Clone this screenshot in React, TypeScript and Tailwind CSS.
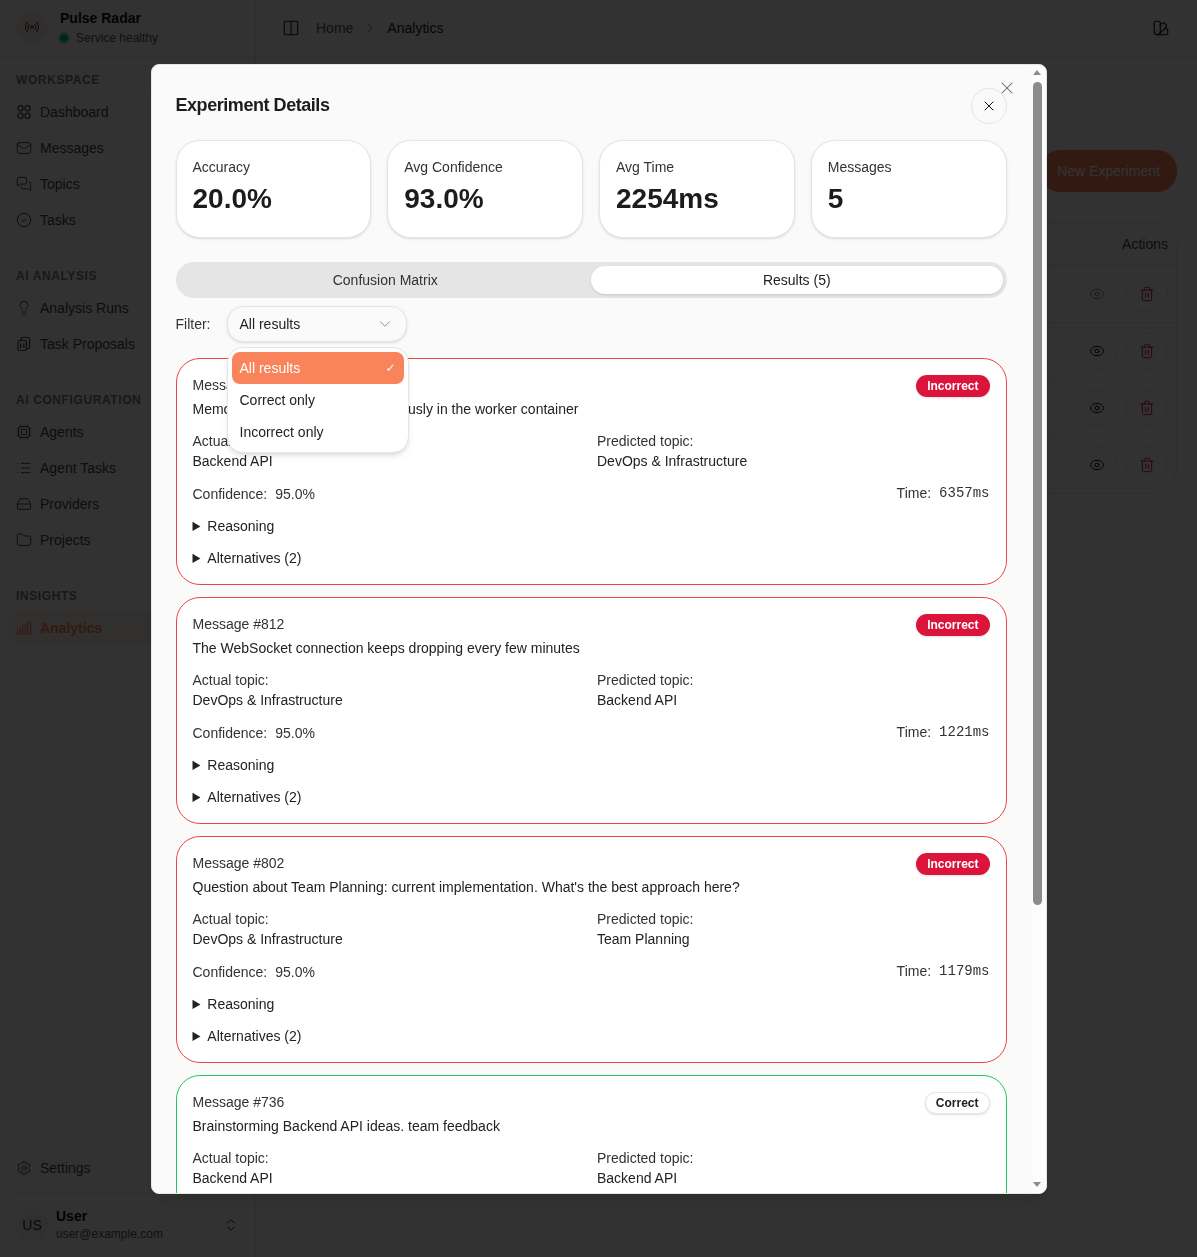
import {
  ChevronDown,
  ChevronRight,
  ChevronsUpDown,
  CircleCheck,
  Columns2,
  Cpu,
  Eye,
  Folder,
  HardDrive,
  Lightbulb,
  List,
  Mail,
  MessagesSquare,
  Radio,
  Settings,
  SwatchBook,
  Trash2,
  X,
  type LucideIcon,
} from "lucide-react";
import type { ReactNode } from "react";

function DashboardIcon() {
  return (
    <svg width="16" height="16" viewBox="0 0 16 16" fill="none" stroke="currentColor" strokeWidth="1.2">
      <rect x="2" y="1.6" width="5" height="5.4" rx="2.4" />
      <rect x="9" y="1.6" width="5" height="5.4" rx="2.4" />
      <rect x="2" y="9" width="5" height="5.4" rx="2.4" />
      <rect x="9" y="9" width="5" height="5.4" rx="2.4" />
    </svg>
  );
}

function ProposalsIcon() {
  return (
    <svg width="16" height="16" viewBox="0 0 16 16" fill="none" stroke="currentColor" strokeWidth="1.2">
      <rect x="2" y="4.5" width="8.5" height="10" rx="1.4" />
      <path d="M5 4.5V2.8c0-.8.6-1.3 1.3-1.3h6c.8 0 1.4.6 1.4 1.4v8.3c0 .8-.6 1.3-1.3 1.3h-1.9" />
      <path d="M4.6 7.5v4.5M7.8 7.5v4.5" />
    </svg>
  );
}

function BarsIcon() {
  return (
    <svg width="16" height="16" viewBox="0 0 16 16" fill="none" stroke="currentColor" strokeWidth="1.2">
      <rect x="1.6" y="9" width="3" height="5.5" rx="1.5" />
      <rect x="6.6" y="5.5" width="3" height="9" rx="1.5" />
      <rect x="11.6" y="1.5" width="3" height="13" rx="1.5" />
    </svg>
  );
}

type NavEntry = { label: string; icon: ReactNode; active?: boolean };

const lucide = (Icon: LucideIcon) => <Icon size={16} strokeWidth={1.5} />;

const sections: { title: string; items: NavEntry[] }[] = [
  {
    title: "Workspace",
    items: [
      { label: "Dashboard", icon: <DashboardIcon /> },
      { label: "Messages", icon: lucide(Mail) },
      { label: "Topics", icon: lucide(MessagesSquare) },
      { label: "Tasks", icon: lucide(CircleCheck) },
    ],
  },
  {
    title: "AI Analysis",
    items: [
      { label: "Analysis Runs", icon: lucide(Lightbulb) },
      { label: "Task Proposals", icon: <ProposalsIcon /> },
    ],
  },
  {
    title: "AI Configuration",
    items: [
      { label: "Agents", icon: lucide(Cpu) },
      { label: "Agent Tasks", icon: lucide(List) },
      { label: "Providers", icon: lucide(HardDrive) },
      { label: "Projects", icon: lucide(Folder) },
    ],
  },
  {
    title: "Insights",
    items: [{ label: "Analytics", icon: <BarsIcon />, active: true }],
  },
];

const stats = [
  { label: "Accuracy", value: "20.0%" },
  { label: "Avg Confidence", value: "93.0%" },
  { label: "Avg Time", value: "2254ms" },
  { label: "Messages", value: "5" },
];

type Result = {
  id: number;
  text: string;
  actual: string;
  predicted: string;
  confidence: string;
  time: string;
  correct: boolean;
};

const results: Result[] = [
  {
    id: 823,
    text: "Memory leak keeps rising continuously in the worker container",
    actual: "Backend API",
    predicted: "DevOps & Infrastructure",
    confidence: "95.0%",
    time: "6357ms",
    correct: false,
  },
  {
    id: 812,
    text: "The WebSocket connection keeps dropping every few minutes",
    actual: "DevOps & Infrastructure",
    predicted: "Backend API",
    confidence: "95.0%",
    time: "1221ms",
    correct: false,
  },
  {
    id: 802,
    text: "Question about Team Planning: current implementation. What's the best approach here?",
    actual: "DevOps & Infrastructure",
    predicted: "Team Planning",
    confidence: "95.0%",
    time: "1179ms",
    correct: false,
  },
  {
    id: 736,
    text: "Brainstorming Backend API ideas. team feedback",
    actual: "Backend API",
    predicted: "Backend API",
    confidence: "95.0%",
    time: "1321ms",
    correct: true,
  },
  {
    id: 701,
    text: "Team Planning sync notes for the next sprint",
    actual: "DevOps & Infrastructure",
    predicted: "Team Planning",
    confidence: "85.0%",
    time: "1492ms",
    correct: false,
  },
];

function Sidebar() {
  return (
    <aside className="flex h-full w-[256px] shrink-0 flex-col border-r border-[#e5e5e5]">
      <div className="flex h-[57px] items-start gap-3 border-b border-[#e5e5e5] pl-4 pt-[11px]">
        <div className="flex h-8 w-8 items-center justify-center rounded-full bg-[#f3e8e4] text-[#222]">
          <Radio size={16} strokeWidth={1.5} />
        </div>
        <div className="-mt-px">
          <div className="text-sm font-bold leading-[16px] text-[#111]">Pulse Radar</div>
          <div className="mt-[4px] flex items-center gap-2 text-xs leading-[16px] text-[#555]">
            <span className="h-2 w-2 rounded-full bg-[#10b981] ring-2 ring-[#10b981]/30" />
            Service healthy
          </div>
        </div>
      </div>
      <nav className="flex flex-1 flex-col gap-[30px] pt-[15px]">
        {sections.map((section) => (
          <div key={section.title}>
            <div className="mb-[6px] pl-4 text-xs font-bold uppercase leading-4 tracking-[0.05em] text-[#777]">
              {section.title}
            </div>
            {section.items.map((item) => (
              <NavItem key={item.label} item={item} />
            ))}
          </div>
        ))}
      </nav>
      <NavItem item={{ label: "Settings", icon: lucide(Settings) }} />
      <div className="mx-4 mt-[6px] flex h-[65px] items-start border-t border-[#e5e5e5] pt-4">
        <div className="flex h-8 w-8 items-center justify-center rounded-full bg-[#eeeeee] text-sm text-[#333]">
          US
        </div>
        <div className="-mt-px ml-2 flex-1">
          <div className="text-sm font-bold leading-4 text-[#111]">User</div>
          <div className="mt-[2px] text-xs leading-4 text-[#555]">user@example.com</div>
        </div>
        <ChevronsUpDown size={16} strokeWidth={1.5} className="mt-2 text-[#222]" />
      </div>
    </aside>
  );
}

function NavItem({ item }: { item: NavEntry }) {
  return (
    <div className="flex h-9 items-center px-2">
      <div
        className={`flex h-[33px] flex-1 items-center gap-2 rounded-xl px-2 text-sm ${
          item.active ? "bg-[#f9835a]/10 font-bold text-[#f9835a]" : "text-[#444]"
        }`}
      >
        {item.icon}
        {item.label}
      </div>
    </div>
  );
}

function PageBehind() {
  return (
    <div className="flex min-w-0 flex-1 flex-col">
      <header className="flex h-[57px] items-center border-b border-[#e5e5e5] pl-[26px] pr-[27px] text-sm text-[#555]">
        <Columns2 size={18} strokeWidth={1.5} className="mr-4 text-[#222]" />
        <span>Home</span>
        <ChevronRight size={14} strokeWidth={1.5} className="mx-[10px]" />
        <span className="text-[#222]">Analytics</span>
        <SwatchBook size={18} strokeWidth={1.5} className="ml-auto text-[#111]" />
      </header>
      <main className="px-5 pt-[93px]">
        <div className="flex justify-end">
          <button className="h-[42px] w-[137px] rounded-[20px] bg-[#f9835a] text-sm text-white">
            New Experiment
          </button>
        </div>
        <div className="mt-[30px] rounded-3xl border border-[#e5e5e5]">
          <div className="flex h-[43px] items-center justify-end border-b border-[#e5e5e5] pr-2 text-sm text-[#444]">
            Actions
          </div>
          {[true, false, false, false].map((disabled, index) => (
            <div
              key={index}
              className="flex h-[57px] items-center justify-end gap-2 border-b border-[#e5e5e5] pr-2 last:h-[56px] last:border-b-0"
            >
              <button
                className={`flex h-9 w-[42px] items-center justify-center rounded-full text-[#111] ${
                  disabled ? "opacity-50" : "border border-[#e5e5e5]"
                }`}
              >
                <Eye size={16} strokeWidth={1.5} />
              </button>
              <button className="flex h-9 w-[42px] items-center justify-center rounded-full border border-[#e5e5e5] text-[#dc143c]">
                <Trash2 size={16} strokeWidth={1.5} />
              </button>
            </div>
          ))}
        </div>
      </main>
    </div>
  );
}

function ResultCard({ result }: { result: Result }) {
  return (
    <div
      className={`flex flex-col gap-3 rounded-3xl border bg-white p-4 text-sm leading-5 text-[#222] ${
        result.correct ? "border-[#22c55e]" : "border-[#ef4444]"
      }`}
    >
      <div>
        <div className="flex items-start justify-between">
          <span className="text-[#333]">Message #{result.id}</span>
          {result.correct ? (
            <span className="flex h-[22px] items-center rounded-full border border-[#e5e5e5] bg-white px-[10px] text-xs font-bold text-[#222] shadow-sm">
              Correct
            </span>
          ) : (
            <span className="flex h-[22px] items-center rounded-full bg-[#dc143c] px-[11px] text-xs font-bold text-white shadow-sm">
              Incorrect
            </span>
          )}
        </div>
        <p className="mt-[2px]">{result.text}</p>
      </div>
      <div className="grid grid-cols-2 gap-3">
        <div>
          <div className="text-[#333]">Actual topic:</div>
          <div>{result.actual}</div>
        </div>
        <div>
          <div className="text-[#333]">Predicted topic:</div>
          <div>{result.predicted}</div>
        </div>
      </div>
      <div className="flex h-[21px] items-start justify-between">
        <div className="mt-px flex gap-2 text-[#333]">
          <span>Confidence:</span>
          <span>{result.confidence}</span>
        </div>
        <div className="flex gap-2 text-[#333]">
          <span>Time:</span>
          <span className="font-['Liberation_Mono',monospace]">{result.time}</span>
        </div>
      </div>
      <details>
        <summary>Reasoning</summary>
      </details>
      <details>
        <summary>Alternatives (2)</summary>
      </details>
    </div>
  );
}

function FilterDropdown() {
  return (
    <div className="absolute left-[51px] top-[41px] z-10 w-[182px] rounded-2xl border border-[#e5e5e5] bg-white p-1 text-sm text-[#222] shadow-md">
      <div className="flex h-8 items-center justify-between rounded-lg bg-[#f9835a] pl-2 pr-[8px] text-white">
        All results
        <span className="font-['DejaVu_Sans',sans-serif] text-xs">✓</span>
      </div>
      <div className="flex h-8 items-center pl-2">Correct only</div>
      <div className="flex h-8 items-center pl-2">Incorrect only</div>
    </div>
  );
}

// headless chromium hides native scrollbars, so the rail is drawn by hand
function ScrollRail() {
  return (
    <div className="flex w-[15px] shrink-0 flex-col items-start bg-[#fcfcfc] pl-[2px]">
      <div className="mt-[5px] h-0 w-0 border-x-[4.5px] border-b-[5px] border-x-transparent border-b-[#8c8c8c]" />
      <div className="mt-[7px] h-[823px] w-[9px] rounded-full bg-[#8c8c8c]" />
      <div className="mt-auto mb-[6px] h-0 w-0 border-x-[4.5px] border-t-[5px] border-x-transparent border-t-[#8c8c8c]" />
    </div>
  );
}

function ExperimentModal() {
  return (
    <div className="flex h-[1130px] w-[896px] overflow-hidden rounded-lg border border-[#e5e5e5] bg-[#fafafa] shadow-lg">
      <div className="relative min-w-0 flex-1 overflow-y-auto p-6">
        <button className="absolute right-[14px] top-[13px] text-[#666]">
          <X size={20} strokeWidth={1.25} />
        </button>
        <div className="-mt-px flex h-[36px] items-center justify-between">
          <h2 className="mb-[2px] text-lg font-bold tracking-tight text-[#1c1c1c]">Experiment Details</h2>
          <button className="flex h-9 w-9 items-center justify-center rounded-full border border-[#e5e5e5] bg-[#fafafa] text-[#111]">
            <X size={16} strokeWidth={1.5} />
          </button>
        </div>
        <div className="mt-4 grid grid-cols-4 gap-4">
          {stats.map((stat) => (
            <div key={stat.label} className="h-[98px] rounded-3xl border border-[#e5e5e5] bg-white px-4 pt-4 shadow-sm">
              <div className="text-sm leading-5 text-[#333]">{stat.label}</div>
              <div className="mt-[4px] text-[28px] font-bold leading-9 text-[#1c1c1c]">{stat.value}</div>
            </div>
          ))}
        </div>
        <div className="mt-6 flex h-9 rounded-full bg-[#e5e5e5] p-1 text-sm text-[#222]">
          <div className="flex flex-1 items-center justify-center text-[#333]">Confusion Matrix</div>
          <div className="flex flex-1 items-center justify-center rounded-full bg-white shadow-sm">Results (5)</div>
        </div>
        <div className="relative mt-2 flex items-center gap-4">
          <span className="text-sm text-[#333]">Filter:</span>
          <div className="flex h-9 w-[180px] items-center justify-between rounded-2xl border border-[#e5e5e5] bg-[#fafafa] pl-3 pr-3 text-sm text-[#222] shadow-sm">
            All results
            <ChevronDown size={18} strokeWidth={1.25} className="text-[#888]" />
          </div>
          <FilterDropdown />
        </div>
        <div className="mt-4 flex flex-col gap-3">
          {results.map((result) => (
            <ResultCard key={result.id} result={result} />
          ))}
        </div>
      </div>
      <ScrollRail />
    </div>
  );
}

export default function App() {
  return (
    <div className="relative flex h-screen w-screen overflow-hidden bg-[#fafafa] font-['Liberation_Sans',Arial,sans-serif]">
      <Sidebar />
      <PageBehind />
      <div className="fixed inset-0 flex items-center justify-center bg-black/80">
        <ExperimentModal />
      </div>
    </div>
  );
}
